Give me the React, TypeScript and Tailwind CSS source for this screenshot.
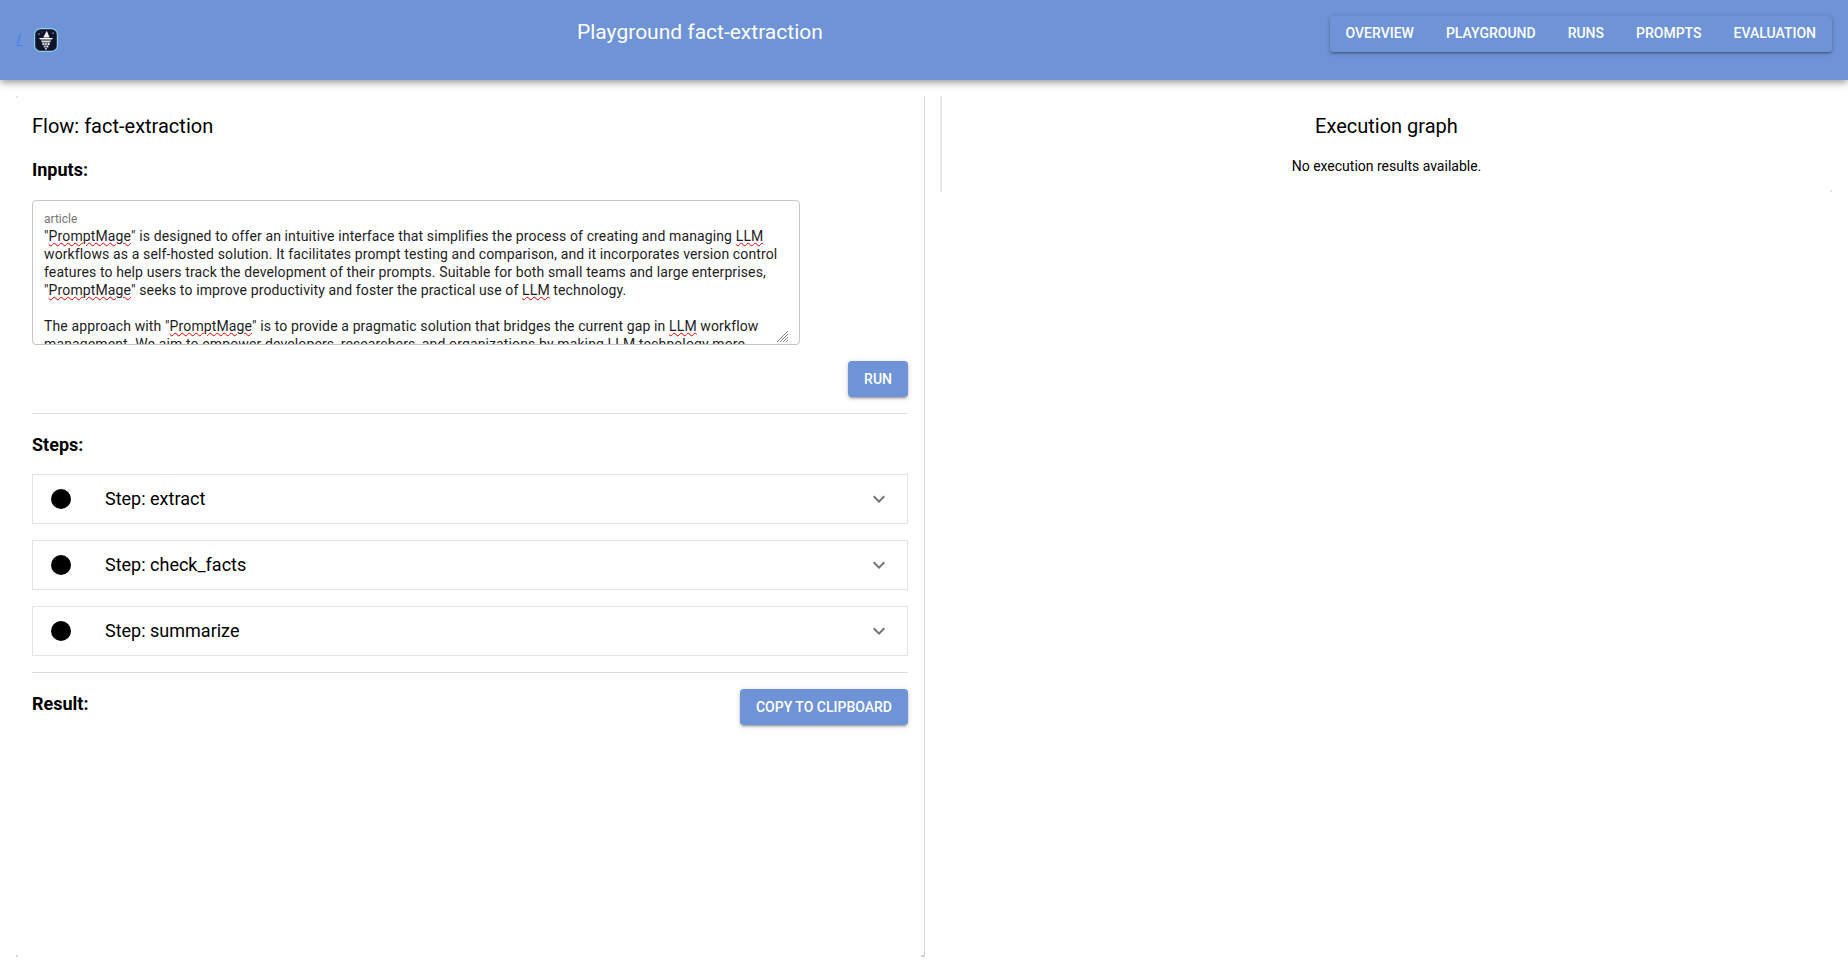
const NAV = ["Overview", "Playground", "Runs", "Prompts", "Evaluation"];
const STEPS = ["extract", "check_facts", "summarize"];

function Typo({ children }: { children: string }) {
  return (
    <span className="underline decoration-wavy decoration-[#e00000] decoration-1 underline-offset-[1px]">
      {children}
    </span>
  );
}

function Logo() {
  return (
    <svg width="24" height="24" viewBox="0 0 24 24" className="shrink-0">
      <rect x="0.6" y="0.6" width="22.8" height="22.8" rx="6" fill="#10142a" stroke="#8fd0ee" strokeWidth="1.2" />
      <path d="M12.8 2.8 L15.6 9.6 H9.2 Z" fill="#f2f2f2" />
      <path d="M4.8 10 H19.2 L17.4 11.6 H6.6 Z" fill="#ffffff" />
      <path d="M7 12.4 H17 L16 14.4 H8 Z" fill="#d8d8dc" />
      <rect x="8.4" y="15" width="2" height="2" fill="#e8e8e8" />
      <rect x="11" y="15" width="2" height="2" fill="#bdbdc4" />
      <rect x="13.6" y="15" width="2" height="2" fill="#e8e8e8" />
      <rect x="9.8" y="17.4" width="2" height="2" fill="#c8c8d0" />
      <rect x="12.4" y="17.4" width="2" height="2" fill="#e8e8e8" />
      <rect x="11" y="19.8" width="2" height="1.8" fill="#bdbdc4" />
      <circle cx="5" cy="6" r="0.8" fill="#b89ab0" />
      <circle cx="8" cy="4" r="0.6" fill="#8a7a94" />
      <circle cx="19" cy="5" r="0.8" fill="#b89ab0" />
    </svg>
  );
}

function PrimaryButton({ label }: { label: string }) {
  return (
    <button className="h-9 rounded-[4px] bg-[#6e93d6] px-4 pb-px text-sm font-medium uppercase text-white shadow-[0_1px_5px_rgba(0,0,0,0.2),0_2px_2px_rgba(0,0,0,0.14),0_3px_1px_-2px_rgba(0,0,0,0.12)]">
      {label}
    </button>
  );
}

export default function App() {
  return (
    <div className="flex h-[973px] flex-col overflow-hidden bg-white font-['Roboto',sans-serif] text-black">
      <header className="relative z-10 flex h-20 shrink-0 items-start bg-[#6e93d6] px-4 shadow-[0_2px_8px_rgba(0,0,0,0.45)]">
        <div className="flex w-[561px] shrink-0 items-center gap-[11px] pt-7">
          <svg width="7" height="14" viewBox="0 0 7 14" className="shrink-0">
            <path d="M4.6 0.5 L1.2 12.5 H6.5" fill="none" stroke="#3f82f0" strokeWidth="1.1" />
          </svg>
          <Logo />
        </div>
        <div className="pt-[18px] text-[21px] leading-7 text-white">Playground fact-extraction</div>
        <nav className="mt-4 ml-auto flex h-9 items-center gap-8 rounded-[4px] bg-[#6e93d6] px-4 pb-[3px] text-sm font-medium uppercase text-white shadow-[0_1px_5px_rgba(0,0,0,0.2),0_2px_2px_rgba(0,0,0,0.14),0_3px_1px_-2px_rgba(0,0,0,0.12)]">
          {NAV.map((n) => (
            <span key={n}>{n}</span>
          ))}
        </nav>
      </header>

      <main className="flex flex-1 items-start gap-[15px] pt-4 pr-4 pl-4">
        <section className="relative h-[861px] w-[909px] shrink-0 border-r border-[#d8d8d8] px-4">
          {/* leftover card corners */}
          <span className="absolute top-0 left-0 size-[2px] bg-[#e8e8e8]" />
          <span className="absolute bottom-0 left-0 size-[2px] bg-[#d8d8d8]" />
          <span className="absolute right-0 bottom-0 h-[2px] w-[3px] bg-[#d0d0d0]" />

          <h2 className="pt-4 text-[20px] leading-7">Flow: fact-extraction</h2>
          <h3 className="pt-4 text-lg leading-7 font-bold">Inputs:</h3>

          <div className="relative mt-[16px] h-[145px] w-[768px] overflow-hidden rounded-[4px] border border-[#c4c4c4] px-[11px] pt-[10px] text-sm leading-[18px] tracking-[0.125px] text-[#1d1d1d]">
            <div className="text-xs leading-[16px] tracking-normal text-[#757575]">article</div>
            <p>
              "<Typo>PromptMage</Typo>" is designed to offer an intuitive interface that simplifies the process of creating and managing <Typo>LLM</Typo> workflows as a self-hosted solution. It facilitates prompt testing and comparison, and it incorporates version control features to help users track the development of their prompts. Suitable for both small teams and large enterprises, "<Typo>PromptMage</Typo>" seeks to improve productivity and foster the practical use of <Typo>LLM</Typo> technology.
            </p>
            <p className="mt-[18px]">
              The approach with "<Typo>PromptMage</Typo>" is to provide a pragmatic solution that bridges the current gap in <Typo>LLM</Typo> workflow management. We aim to empower developers, researchers, and organizations by making LLM technology more
            </p>
            <svg width="11" height="11" viewBox="0 0 11 11" className="absolute right-[11px] bottom-[2px]">
              <path d="M0 11 L11 0 M3 11 L11 3 M6 11 L11 6 M9 11 L11 9" stroke="#777" strokeWidth="0.9" />
            </svg>
          </div>

          <div className="mt-4 flex justify-end">
            <PrimaryButton label="Run" />
          </div>
          <div className="mt-4 h-px bg-[#dedede]" />

          <h3 className="pt-[17px] text-lg leading-7 font-bold">Steps:</h3>
          <div className="mt-[15px] flex flex-col gap-4">
            {STEPS.map((s) => (
              <div key={s} className="flex h-[50px] items-center border border-[#e4e4e8] pr-4 pl-[18px]">
                <span className="size-5 shrink-0 rounded-full bg-black" />
                <span className="ml-[34px] flex-1 text-lg">Step: {s}</span>
                <svg width="24" height="24" viewBox="0 0 24 24" fill="#757575" className="shrink-0">
                  <path d="M7.41 8.59 12 13.17l4.59-4.58L18 10l-6 6-6-6z" />
                </svg>
              </div>
            ))}
          </div>
          <div className="mt-4 h-px bg-[#dedede]" />

          <div className="mt-4 flex items-start justify-between">
            <h3 className="pt-px text-lg leading-7 font-bold">Result:</h3>
            <PrimaryButton label="Copy to clipboard" />
          </div>
        </section>

        <section className="relative h-[96px] flex-1 border-l-2 border-[#e8e8e8] pt-4 pr-px text-center">
          <span className="absolute right-0 bottom-0 size-[2px] bg-[#e4e4e4]" />
          <h2 className="text-[20px] leading-7">Execution graph</h2>
          <p className="pt-4 text-sm leading-5">No execution results available.</p>
        </section>
      </main>
    </div>
  );
}
